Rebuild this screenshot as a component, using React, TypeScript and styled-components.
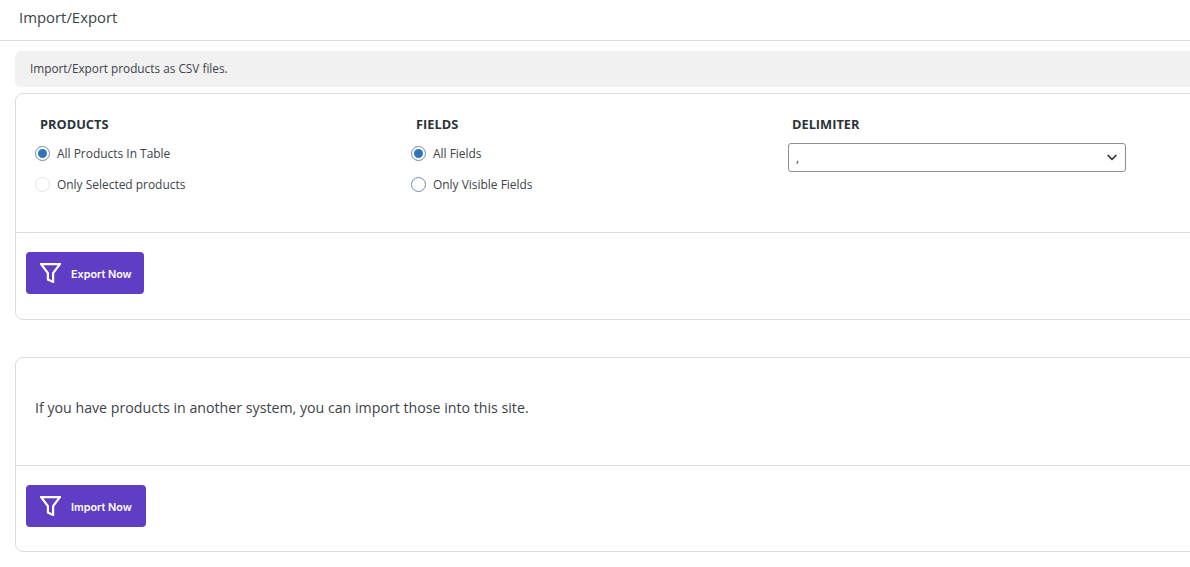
import styled, { createGlobalStyle } from 'styled-components';

const GlobalStyle = createGlobalStyle`
  html, body {
    margin: 0;
    padding: 0;
    background: #ffffff;
    overflow: hidden;
  }
  * {
    box-sizing: border-box;
  }
`;

const Page = styled.div`
  width: 1190px;
  height: 567px;
  overflow: hidden;
  font-family: 'Open Sans', 'Noto Sans', sans-serif;
  color: #3c434a;
`;

const TopBar = styled.div`
  height: 41px;
  padding: 8px 0 0 19px;
  border-bottom: 1px solid #dcdcde;
`;

const PageTitle = styled.h1`
  margin: 0;
  font-size: 14.9px;
  line-height: 19px;
  font-weight: 500;
  color: #3c434a;
`;

const Content = styled.div`
  width: 1210px;
  margin-left: 15px;
`;

const Notice = styled.div`
  height: 36px;
  margin-top: 10px;
  padding-left: 15px;
  background: #f1f1f1;
  border-radius: 6px 0 0 6px;
  font-size: 11.8px;
  line-height: 35px;
`;

const Card = styled.section<{ $top: number }>`
  margin-top: ${(p) => p.$top}px;
  border: 1px solid #dcdcde;
  border-radius: 8px;
`;

const OptionGrid = styled.div`
  height: 139px;
  padding: 20px 0 0 24px;
  display: grid;
  grid-template-columns: 376px 376px 1fr;
  border-bottom: 1px solid #dcdcde;
`;

const Column = styled.div`
  display: flex;
  flex-direction: column;
`;

const ColumnTitle = styled.h3`
  margin: 0 0 10px;
  font-size: 12.8px;
  line-height: 20px;
  font-weight: 700;
  color: #2c3338;
`;

const RadioRow = styled.label`
  display: flex;
  align-items: center;
  gap: 7px;
  height: 31px;
  margin-left: -5px;
  font-size: 11.95px;
  margin-top: -6px;
  margin-bottom: 6px;
`;

const Radio = styled.span<{ $checked?: boolean; $muted?: boolean }>`
  width: 15px;
  height: 15px;
  flex: none;
  border-radius: 50%;
  border: 1px solid ${(p) => (p.$muted ? '#e4e4e4' : '#6f8ba3')};
  display: flex;
  align-items: center;
  justify-content: center;

  &::after {
    content: '';
    display: ${(p) => (p.$checked ? 'block' : 'none')};
    width: 9px;
    height: 9px;
    border-radius: 50%;
    background: #2f74bd;
  }
`;

const SelectBox = styled.div`
  width: 338px;
  height: 29px;
  margin-left: -4px;
  margin-top: -1px;
  padding: 0 8px 0 7px;
  display: flex;
  align-items: center;
  justify-content: space-between;
  border: 1px solid #8c8f94;
  border-radius: 3px;
  font-size: 12px;
`;

const Footer = styled.div<{ $height: number }>`
  height: ${(p) => p.$height}px;
  padding: 19px 0 0 10px;
`;

const ActionButton = styled.button<{ $width: number }>`
  width: ${(p) => p.$width}px;
  height: 42px;
  padding: 0 0 0 14px;
  display: flex;
  align-items: center;
  gap: 10px;
  border: none;
  border-radius: 4px;
  background: #5f3dc4;
  color: #ffffff;
  font-family: Inter, Roboto, sans-serif;
  font-size: 10.8px;
  font-weight: 600;
`;

const ButtonLabel = styled.span`
  padding-top: 2px;
`;

const Message = styled.div`
  height: 108px;
  padding: 0 0 8px 19px;
  display: flex;
  align-items: center;
  font-size: 14.2px;
  border-bottom: 1px solid #dcdcde;
`;

const FunnelIcon = () => (
  <svg width="21" height="20" viewBox="0 0 21 20" fill="none">
    <path d="M1.1 1.1H19.9L13.1 10V18.9L7.9 16.5V10Z" stroke="#ffffff" strokeWidth="2.2" />
  </svg>
);

const ChevronIcon = () => (
  <svg width="10" height="7" viewBox="0 0 10 7" fill="none">
    <path d="M0.7 1L5 5.3L9.3 1" stroke="#2c3338" strokeWidth="1.6" />
  </svg>
);

const App = () => {
  return (
    <Page>
      <GlobalStyle />
      <TopBar>
        <PageTitle>Import/Export</PageTitle>
      </TopBar>
      <Content>
        <Notice>Import/Export products as CSV files.</Notice>
        <Card $top={6}>
          <OptionGrid>
            <Column>
              <ColumnTitle>PRODUCTS</ColumnTitle>
              <RadioRow>
                <Radio $checked />
                All Products In Table
              </RadioRow>
              <RadioRow>
                <Radio $muted />
                Only Selected products
              </RadioRow>
            </Column>
            <Column>
              <ColumnTitle>FIELDS</ColumnTitle>
              <RadioRow>
                <Radio $checked />
                All Fields
              </RadioRow>
              <RadioRow>
                <Radio />
                Only Visible Fields
              </RadioRow>
            </Column>
            <Column>
              <ColumnTitle>DELIMITER</ColumnTitle>
              <SelectBox>
                <span>,</span>
                <ChevronIcon />
              </SelectBox>
            </Column>
          </OptionGrid>
          <Footer $height={86}>
            <ActionButton $width={118}>
              <FunnelIcon />
              <ButtonLabel>Export Now</ButtonLabel>
            </ActionButton>
          </Footer>
        </Card>
        <Card $top={37}>
          <Message>If you have products in another system, you can import those into this site.</Message>
          <Footer $height={85}>
            <ActionButton $width={120}>
              <FunnelIcon />
              <ButtonLabel>Import Now</ButtonLabel>
            </ActionButton>
          </Footer>
        </Card>
      </Content>
    </Page>
  );
};

export default App;
